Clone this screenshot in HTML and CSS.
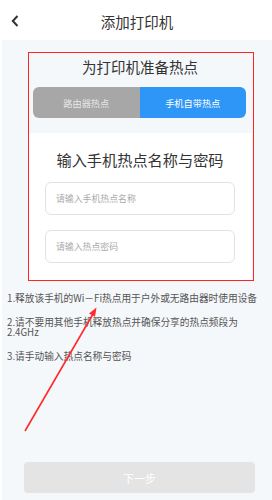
FILE: index.html
```html
<!DOCTYPE html>
<html>
<head>
  <meta charset="UTF-8">
  <title>添加打印机</title>
  <link rel="stylesheet" href="styles.css">
</head>
<body>

  <div class="topbar">
    <div class="back">
      <svg width="8" height="12" viewBox="0 0 8 12"><path d="M6.5 1 L1.8 6 L6.5 11" fill="none" stroke="#333" stroke-width="2"/></svg>
    </div>
    <div class="title">添加打印机</div>
    <div></div>
  </div>

  <div class="panel">
    <h2 class="panel-title">为打印机准备热点</h2>
    <div class="tabs">
      <div class="tab">路由器热点</div>
      <div class="tab active">手机自带热点</div>
    </div>
    <div class="card">
      <h3 class="card-title">输入手机热点名称与密码</h3>
      <input class="field" type="text" placeholder="请输入手机热点名称">
      <input class="field" type="password" placeholder="请输入热点密码">
    </div>
    <div class="mark"></div>
  </div>

  <div class="notes">
    <p>1.释放该手机的Wi－Fi热点用于户外或无路由器时使用设备</p>
    <p>2.请不要用其他手机释放热点并确保分享的热点频段为2.4GHz</p>
    <p>3.请手动输入热点名称与密码</p>
  </div>

  <button class="next">下一步</button>

  <!-- annotation arrow -->
  <svg class="arrow" width="272" height="500" viewBox="0 0 272 500">
    <line x1="25" y1="431" x2="93" y2="314" stroke="#ff2a2a" stroke-width="1.6"/>
    <polygon points="96.5,307.5 95,316.8 89,313.4" fill="#ff2a2a"/>
  </svg>

</body>
</html>
```

FILE: styles.css
```css
body {
  margin: 0;
  min-height: 100vh;
  display: flex;
  flex-direction: column;
  background-color: #f5f8fb;
  font-family: "Noto Sans CJK SC", "Noto Sans", sans-serif;
  color: #333;
  border-left: 2px solid #fff;
  box-sizing: border-box;
}

.topbar {
  height: 40px;
  background-color: #fff;
  display: grid;
  grid-template-columns: 38px 1fr 38px;
  align-items: center;
  margin-left: -2px;
}

.back {
  display: flex;
  padding-left: 11px;
  padding-top: 1px;
}

.title {
  text-align: center;
  font-size: 14.5px;
  color: #333;
  padding-top: 3px;
  padding-left: 2px;
}

.panel {
  position: relative;
  width: 224px;
  margin: 12px 0 0 26px;
}

.panel-title {
  margin: 5px 0 10px;
  font-size: 14.5px;
  font-weight: 400;
  line-height: 20px;
  text-align: center;
  color: #333;
}

.tabs {
  display: flex;
  height: 31px;
  margin: 0 6px 0 5px;
  border-radius: 6px;
  overflow: hidden;
}

.tab {
  flex: 1;
  display: flex;
  justify-content: center;
  align-items: center;
  font-size: 9.2px;
  background-color: #a7a7a7;
  color: #e6e6e6;
}

.tab.active {
  background-color: #2e96f7;
  color: #fff;
}

.card {
  margin-top: 15px;
  background-color: #fff;
  padding: 15px 17px 17px;
  display: flex;
  flex-direction: column;
  gap: 15px;
}

.card-title {
  margin: 0 0 -3px;
  font-size: 15.2px;
  font-weight: 400;
  line-height: 22px;
  text-align: center;
  color: #333;
}

.field {
  height: 33px;
  box-sizing: border-box;
  border: 1px solid #e2e2e2;
  border-radius: 6px;
  padding: 0 10px;
  font-family: inherit;
  font-size: 8.9px;
  outline: none;
}

.field::placeholder {
  color: #aaa;
}

.mark {
  position: absolute;
  top: 0;
  left: 0;
  width: 226px;
  height: 229px;
  box-sizing: border-box;
  border: 1.6px solid #ff2323;
}

.notes {
  margin-top: 13px;
  padding: 0 6px 0 5px;
  font-size: 9.7px;
  line-height: 10px;
  color: #555;
}

.notes p {
  margin: 0 0 14px;
}

.next {
  margin: auto 17px 7px 22px;
  height: 31px;
  border: none;
  border-radius: 4px;
  background-color: #e4e4e4;
  color: #fff;
  font-family: inherit;
  font-size: 11px;
}

.arrow {
  position: absolute;
  top: 0;
  left: 0;
  pointer-events: none;
}
```
